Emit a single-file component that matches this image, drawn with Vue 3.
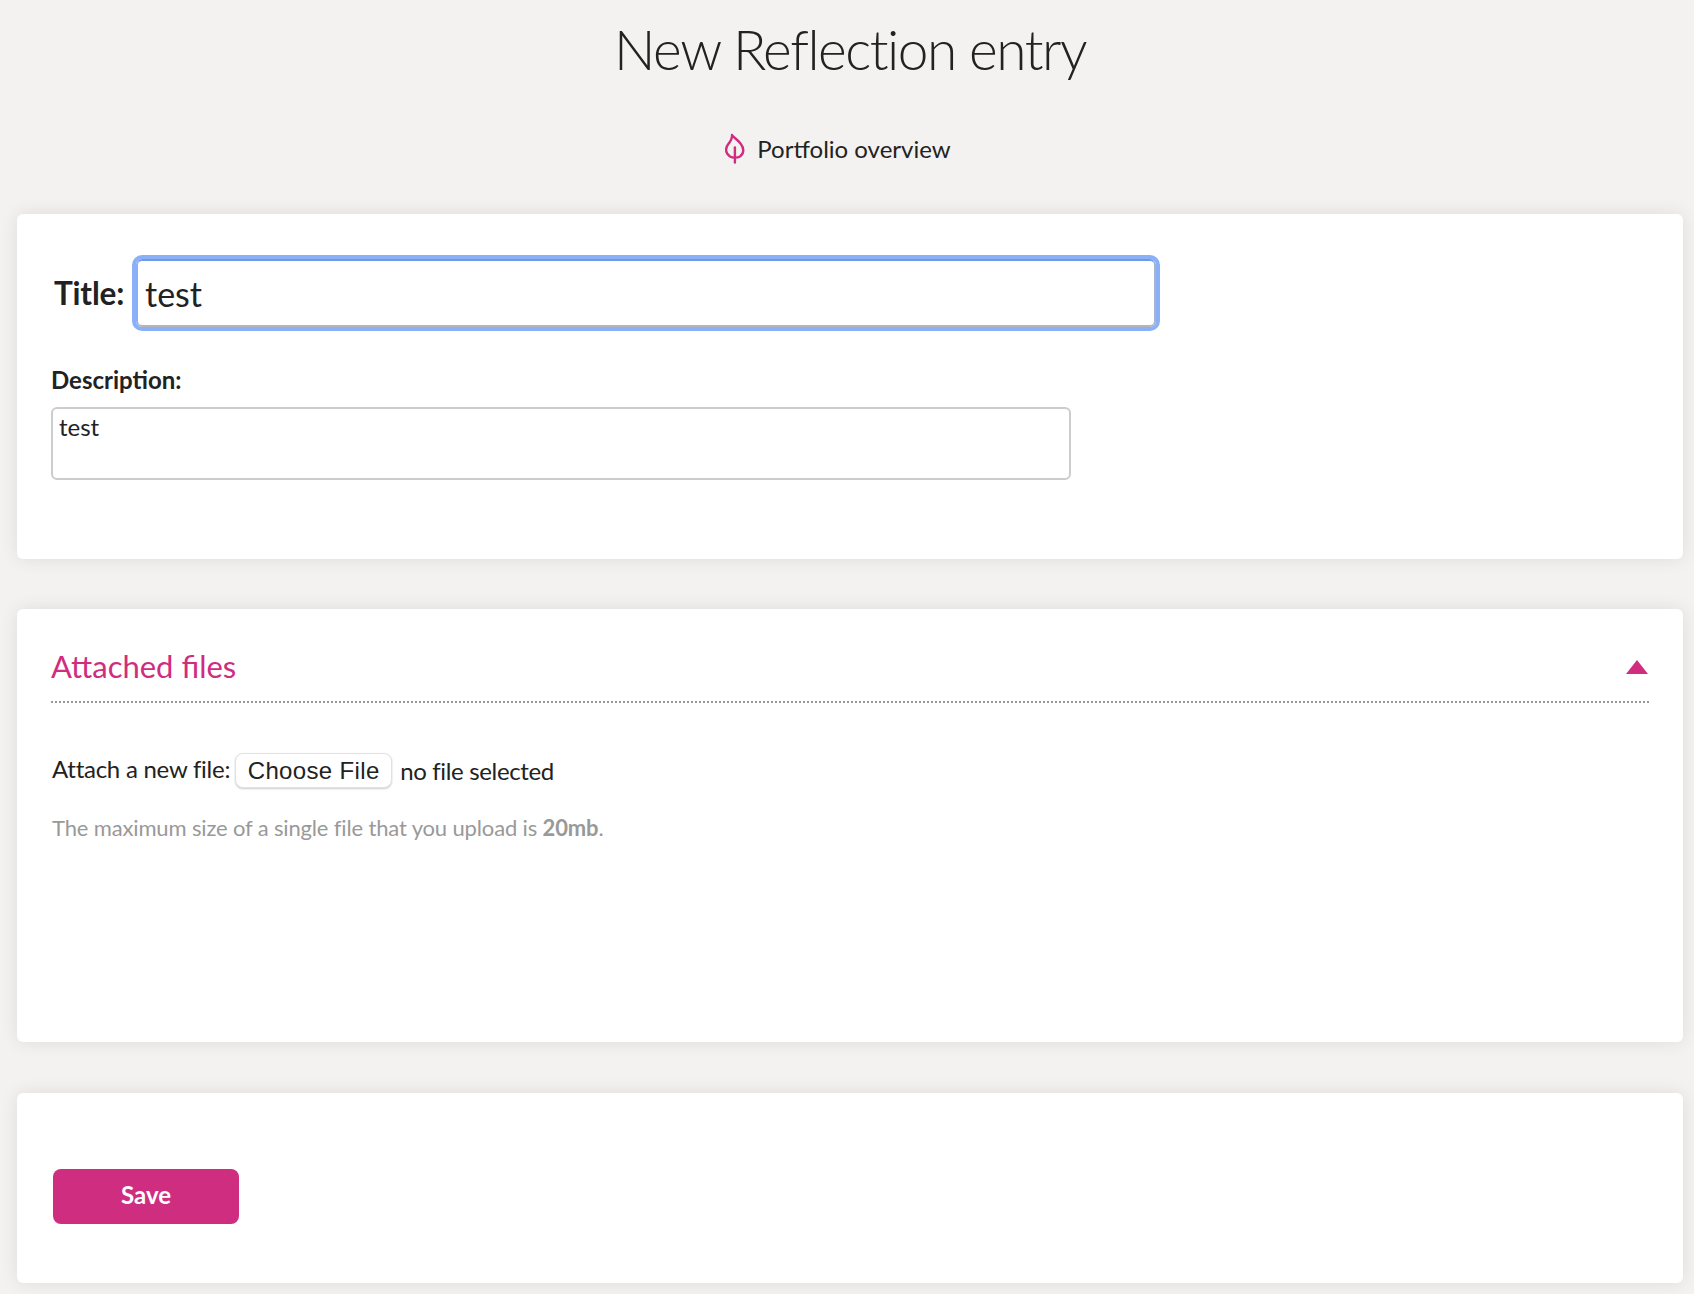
<script setup>
const hint = 'The maximum size of a single file that you upload is '
</script>

<template>
  <div class="page">
    <h1 class="heading">New Reflection entry</h1>
    <nav class="crumb">
      <svg class="leaf" viewBox="0 0 20 31" width="20" height="31" fill="none" stroke="#d02c80" stroke-width="2.4" stroke-linecap="round" stroke-linejoin="round">
        <path d="M7 2C8.5 4.5 12.5 6.5 15.5 10.5C19.5 15.5 19 20.5 15 23.5C12.5 25 7.5 25 5 23.5C0.5 20.5 0 15.5 3 11.5C5.5 8.5 7.5 6 7 2Z" />
        <path d="M9.9 14.5V29.5" />
      </svg>
      <span>Portfolio overview</span>
    </nav>

    <section class="card card-form">
      <div class="title-row">
        <label class="title-label" for="title">Title:</label>
        <input id="title" class="title-input" type="text" value="test" />
      </div>
      <label class="desc-label" for="desc">Description:</label>
      <textarea id="desc" class="desc-input" rows="2">test</textarea>
    </section>

    <section class="card card-files">
      <header class="files-head">
        <h2 class="files-title">Attached files</h2>
        <span class="caret"></span>
      </header>
      <div class="attach-row">
        <span class="attach-label">Attach a new file:</span>
        <button class="choose" type="button">Choose File</button>
        <span class="none">no file selected</span>
      </div>
      <p class="hint">{{ hint }}<strong>20mb</strong>.</p>
    </section>

    <section class="card card-save">
      <button class="save" type="button">Save</button>
    </section>
  </div>
</template>

<style>
html, body { margin: 0; background: #f3f2f0; }
</style>

<style scoped>
.page {
  box-sizing: border-box;
  height: 1294px;
  padding: 0 11px 0 17px;
  overflow: hidden;
  font-family: Lato, "Liberation Sans", sans-serif;
  color: #222;
  background: #f3f2f0;
}
.heading {
  margin: 0;
  height: 101px;
  font-size: 55px;
  font-weight: 300;
  letter-spacing: -1.5px;
  line-height: 99px;
  text-align: center;
}
.crumb {
  display: flex;
  align-items: center;
  justify-content: center;
  gap: 12px;
  height: 113px;
  padding-right: 24px;
  padding-bottom: 19px;
  box-sizing: border-box;
  font-size: 24px;
}
.card {
  box-sizing: border-box;
  background: #fff;
  border-radius: 6px;
  box-shadow: 0 0 18px rgba(0, 0, 0, 0.09);
}
.card-form {
  height: 345px;
  padding: 45px 0 0 34px;
}
.title-row {
  display: flex;
  align-items: center;
  gap: 12px;
  margin-left: 3px;
}
.title-label {
  font-size: 31.5px;
  font-weight: 700;
  letter-spacing: -0.2px;
}
.title-input {
  box-sizing: border-box;
  width: 1020px;
  height: 68px;
  padding: 0 7px;
  border: 2px solid #b5b5b5;
  border-top-color: #6f9ae8;
  border-left-color: #8ab1f8;
  border-right-color: #a5b5d0;
  border-radius: 6px;
  outline: 4px solid #8ab1f8;
  background: #fff;
  font-family: inherit;
  font-size: 34px;
  color: #222;
}
.desc-label {
  display: block;
  margin-top: 38px;
  font-size: 24px;
  font-weight: 700;
}
.desc-input {
  display: block;
  box-sizing: border-box;
  width: 1020px;
  height: 73px;
  margin-top: 13px;
  padding: 3px 6px;
  border: 2px solid #ccc;
  border-radius: 6px;
  outline: none;
  resize: none;
  font-family: inherit;
  font-size: 24px;
  color: #222;
}
.card-files {
  height: 433px;
  margin-top: 50px;
  padding: 0 34px;
}
.files-head {
  display: flex;
  align-items: center;
  justify-content: space-between;
  height: 92px;
  padding-right: 1px;
  border-bottom: 2px dotted #999;
}
.files-title {
  margin: 0;
  padding-top: 22px;
  font-size: 31px;
  font-weight: 400;
  color: #d02c80;
}
.caret {
  width: 0;
  height: 0;
  margin-top: 24px;
  border-left: 11px solid transparent;
  border-right: 11px solid transparent;
  border-bottom: 14px solid #d02c80;
}
.attach-row {
  display: flex;
  align-items: center;
  margin-top: 48px;
  padding-left: 1px;
  font-size: 24px;
  letter-spacing: -0.25px;
}
.attach-label { padding-bottom: 3px; }
.choose {
  box-sizing: border-box;
  width: 157px;
  height: 35px;
  margin: 2px 8px 0 5px;
  padding: 0;
  border: 1px solid #e2e2e2;
  border-radius: 8px;
  background: #fff;
  box-shadow: 0 1px 2px rgba(0, 0, 0, 0.2);
  font-family: "Liberation Sans", sans-serif;
  font-size: 24px;
  letter-spacing: 0.35px;
  color: #222;
}
.none {
  padding-top: 1px;
  letter-spacing: -0.35px;
}
.hint {
  margin: 26px 0 0 1px;
  font-size: 22px;
  letter-spacing: -0.15px;
  color: #999;
}
.hint strong { font-weight: 700; }
.card-save {
  height: 190px;
  margin-top: 51px;
  padding: 76px 0 0 36px;
}
.save {
  display: block;
  width: 186px;
  height: 55px;
  padding: 0 0 5px;
  border: 0;
  border-radius: 8px;
  background: #ce2d80;
  font-family: inherit;
  font-size: 24px;
  font-weight: 700;
  color: #fff;
}
</style>
